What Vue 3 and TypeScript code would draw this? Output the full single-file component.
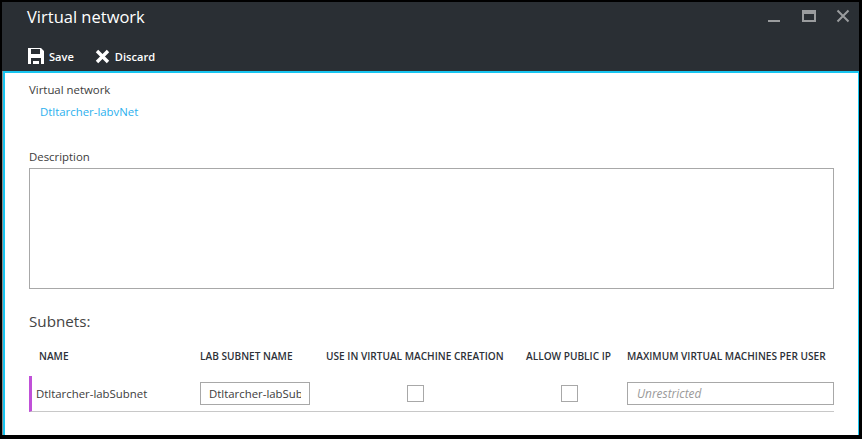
<template>
  <div class="blade">
    <header class="head">
      <div class="title-row">
        <h1 class="title">Virtual network</h1>
        <div class="win-btns">
          <svg class="min-btn" width="14" height="14" viewBox="0 0 14 14"><rect x="1" y="11" width="12" height="2" fill="#9a9c9e" /></svg>
          <svg width="14" height="14" viewBox="0 0 14 14"><path d="M0 1h14v12H0zM2 5v6h10V5z" fill="#9a9c9e" fill-rule="evenodd" /></svg>
          <svg width="14" height="14" viewBox="0 0 14 14"><path d="M1.5 1.5l11 11M12.5 1.5l-11 11" stroke="#9a9c9e" stroke-width="2" fill="none" /></svg>
        </div>
      </div>
      <div class="commands">
        <button class="cmd">
          <svg width="16" height="16" viewBox="0 0 16 16"><path d="M0 0h13l3 3v13H0zM3 1v5h9V1zM3 10v6h2v-3h6v3h2v-6z" fill="#fff" fill-rule="evenodd" /></svg>
          Save
        </button>
        <button class="cmd">
          <svg width="15" height="15" viewBox="0 0 15 15"><path d="M2 2l11 11M13 2L2 13" stroke="#fff" stroke-width="3.4" fill="none" /></svg>
          Discard
        </button>
      </div>
    </header>
    <main class="content">
      <div class="label">Virtual network</div>
      <a class="link">Dtltarcher-labvNet</a>
      <div class="label desc-label">Description</div>
      <div class="desc-box"></div>
      <h2 class="subnets">Subnets:</h2>
      <div class="grid heads">
        <div v-for="c in columns" :key="c" class="th">{{ c }}</div>
      </div>
      <div class="grid row">
        <div class="name">{{ subnet }}</div>
        <div><input class="input lab" :value="subnet" /></div>
        <div class="check-cell"><span class="check"></span></div>
        <div class="check-cell ip"><span class="check"></span></div>
        <div><input class="input max" placeholder="Unrestricted" /></div>
      </div>
    </main>
  </div>
</template>

<script setup lang="ts">
const columns: string[] = [
  'NAME',
  'LAB SUBNET NAME',
  'USE IN VIRTUAL MACHINE CREATION',
  'ALLOW PUBLIC IP',
  'MAXIMUM VIRTUAL MACHINES PER USER',
]
const subnet = 'Dtltarcher-labSubnet'
</script>

<style>
html,
body {
  margin: 0;
  background: #000;
}
</style>

<style scoped>
.blade {
  width: 862px;
  height: 439px;
  box-sizing: border-box;
  padding: 2px 3px 4px 2px;
  background: #000;
  display: flex;
  flex-direction: column;
  font-family: "Open Sans", "Liberation Sans", sans-serif;
  overflow: hidden;
}
.head {
  height: 69px;
  background: #2a2f34;
  color: #fff;
  flex: none;
}
.title-row {
  display: flex;
  justify-content: space-between;
  padding: 2px 9px 0 25px;
  height: 37px;
  box-sizing: border-box;
}
.title {
  margin: 0;
  font-size: 16.5px;
  font-weight: 400;
  line-height: 26px;
}
.win-btns {
  display: flex;
  gap: 20px;
  padding-top: 5px;
}
.min-btn {
  margin-right: 1px;
}
.commands {
  display: flex;
  gap: 21px;
  padding: 9px 0 0 26px;
}
.cmd {
  display: flex;
  align-items: center;
  gap: 5px;
  padding: 0;
  border: none;
  background: none;
  color: #fff;
  font: 600 11.1px "Open Sans", "Liberation Sans", sans-serif;
}
.content {
  flex: 1;
  min-height: 0;
  background: #fff;
  border: 2px solid #18c5f0;
  border-bottom: none;
  border-right-width: 1px;
  margin-left: 1px;
  box-shadow: -1px 0 0 #8a8a8a;
  padding: 8px 24px 0 24px;
  color: #3c3c3c;
  font-size: 11.4px;
}
.label {
  line-height: 18px;
}
.link {
  display: block;
  margin: 4px 0 0 11px;
  line-height: 18px;
  color: #2bb0ee;
}
.desc-label {
  margin-top: 27px;
}
.desc-box {
  height: 119px;
  margin-top: 2px;
  border: 1px solid #a8a8a8;
}
.subnets {
  margin: 22px 0 0;
  font-size: 15.2px;
  font-weight: 400;
  line-height: 20px;
  color: #444;
}
.grid {
  display: grid;
  grid-template-columns: 171px 126px 200px 101px 207px;
}
.row {
  grid-template-columns: 168px 126px 200px 101px 207px;
  margin-top: 10px;
  height: 35px;
  align-items: center;
  border-bottom: 1px solid #c8c8c8;
  border-left: 3px solid #c050d8;
}
.heads {
  margin-top: 15px;
  height: 20px;
  align-items: center;
}
.th {
  font-size: 10.1px;
  font-weight: 600;
  color: #2d3138;
  white-space: nowrap;
}
.th:first-child {
  padding-left: 10px;
}
.name {
  padding-left: 4px;
  white-space: nowrap;
}
.input {
  display: block;
  height: 23px;
  box-sizing: border-box;
  border: 1px solid #a8a8a8;
  border-radius: 0;
  outline: none;
  background: #fff;
  color: #3c3c3c;
  font: inherit;
}
.lab {
  width: 110px;
  padding: 0 8px;
}
.max {
  width: 207px;
  padding: 0 9px;
}
.max::placeholder {
  color: #9a9a9a;
  font-style: italic;
  font-size: 11.9px;
  opacity: 1;
}
.check-cell {
  padding-left: 81px;
  display: flex;
}
.check-cell.ip {
  padding-left: 35px;
}
.check {
  width: 17px;
  height: 17px;
  box-sizing: border-box;
  border: 1px solid #a8a8a8;
}
</style>
